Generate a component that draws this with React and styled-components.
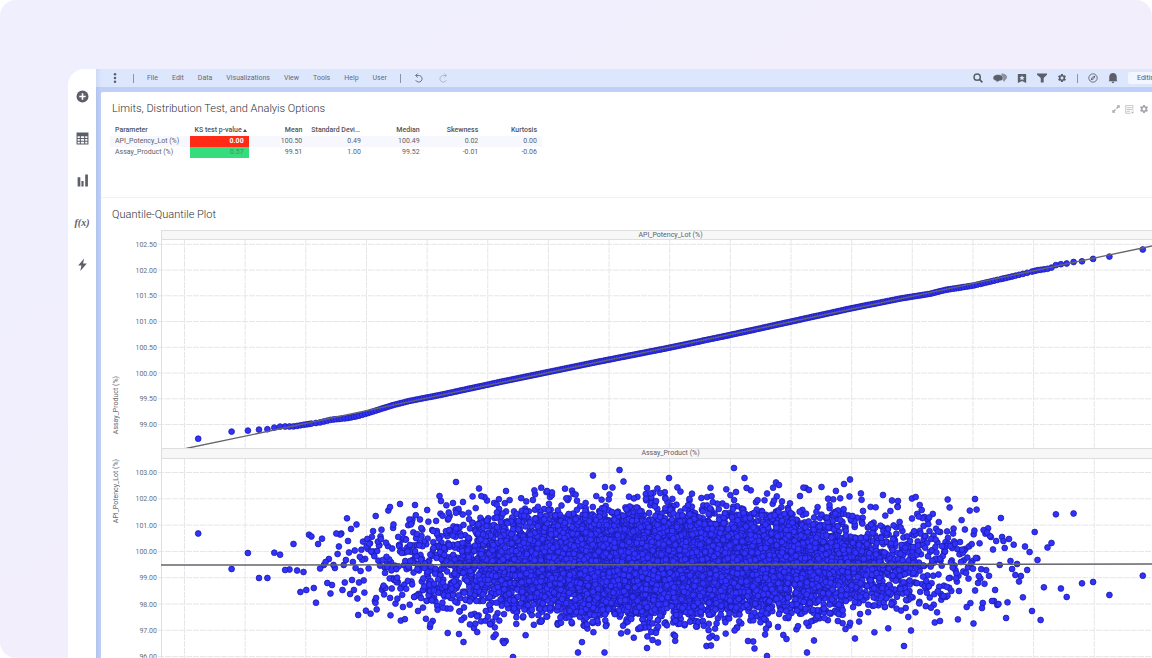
import React from "react";
import styled, { createGlobalStyle } from "styled-components";
import { MdSettings } from "react-icons/md";

const Global = createGlobalStyle`
  *, *::before, *::after { box-sizing: border-box; }
  html, body { margin: 0; background: #fff; }
  body { font-family: Roboto, "Liberation Sans", sans-serif; color: #5a5c66; }
  button { font: inherit; color: inherit; border: 0; padding: 0; background: none; cursor: pointer; }
`;

const Stage = styled.div`
  height: 100vh;
  padding: 69px 0 0 68px;
  overflow: hidden;
  border-radius: 16px 16px 0 16px;
  background: linear-gradient(145deg, #efeffe 15%, #f3eefb 50%, #efecfb);
`;

const Window = styled.div`
  display: flex;
  min-height: 100%;
  margin-right: -27px;
  border-radius: 16px 0 0 0;
  overflow: hidden;
  background: #fff;
`;

const Sidebar = styled.nav`
  display: flex;
  flex-direction: column;
  align-items: center;
  gap: 28px;
  width: 28px;
  padding-top: 20px;
`;

const IconButton = styled.button`
  display: flex;
  flex: none;
  align-items: center;
  justify-content: center;
  width: ${(p) => p.$w || 10}px;
  height: ${(p) => p.$h || 10}px;
  color: ${(p) => p.$color || "#5c5e68"};
`;

const FormulaText = styled.span`
  font: italic bold 10px "Liberation Serif", serif;
`;

const Main = styled.main`
  flex: 1;
  min-width: 0;
  display: flex;
  flex-direction: column;
  background: linear-gradient(90deg, #b2c4ee, #bfcff7 5px);
`;

const TopBar = styled.header`
  display: flex;
  align-items: center;
  justify-content: space-between;
  height: 18px;
  padding-left: 14px;
  background: linear-gradient(90deg, #cddaf5, #dce7fe 6px);
`;

const BarGroup = styled.div`
  display: flex;
  align-items: center;
  gap: ${(p) => p.$gap}px;
`;

const MenuButton = styled.button`
  font-size: 7px;
  line-height: 10px;
  color: #666a78;
`;

const Divider = styled.span`
  width: 1px;
  height: 9px;
  margin: 0 ${(p) => (p.$tight ? "-1px" : "0")};
  background: #8b93a6;
`;

const ModeButton = styled.button`
  width: 51px;
  height: 12px;
  padding-left: 9px;
  border-radius: 2px 0 0 2px;
  background: #f3f6fe;
  font-size: 7px;
  line-height: 12px;
  text-align: left;
`;

const Sheet = styled.div`
  flex: 1;
  margin: 5px 0 0 5px;
  border-radius: 2px 0 0 0;
  background: #fff;
`;

const Panel = styled.section`
  padding: 9px 0 0 9px;
  min-height: ${(p) => p.$min || 0}px;
  border-bottom: 1px solid #f0f1f8;
`;

const PanelHead = styled.div`
  display: flex;
  align-items: center;
  justify-content: space-between;
  height: 16px;
  padding: 0 30px 0 2px;
`;

const PanelTitle = styled.h2`
  margin: 0;
  font-size: 11px;
  line-height: 16px;
  font-weight: 300;
  color: #303136;
`;

const Table = styled.table`
  width: 432px;
  margin-top: 8px;
  table-layout: fixed;
  border-collapse: collapse;
  font-size: 7px;
  line-height: 11px;
  color: #5e6068;
`;

const HeadCell = styled.th`
  width: ${(p) => (p.$first ? "80px" : "auto")};
  padding: ${(p) => (p.$first ? "0 0 0 5px" : p.$sorted ? "0 2px 0 0" : "0 5px 0 4px")};
  text-align: ${(p) => (p.$first ? "left" : "right")};
  font-weight: 500;
  color: #50525a;
  white-space: nowrap;
  overflow: hidden;
  text-overflow: ellipsis;
`;

const Row = styled.tr`
  background: ${(p) => (p.$shade ? "#f7f8fe" : "transparent")};
`;

const Cell = styled.td`
  padding: ${(p) => (p.$first ? "0 0 0 5px" : "0 5px 0 0")};
  text-align: ${(p) => (p.$first ? "left" : "right")};
  background: ${(p) => p.$bg || "transparent"};
  color: ${(p) => p.$fg || "inherit"};
  font-weight: ${(p) => (p.$strong ? 700 : 400)};
`;

const SortMark = styled.span`
  display: inline-block;
  margin-left: 1px;
  border: 2px solid transparent;
  border-top: 0;
  border-bottom: 3px solid #45474f;
`;

const Trellis = styled.div`
  display: flex;
  margin-top: 7px;
`;

const AxisTitles = styled.div`
  display: flex;
  flex-direction: column;
  flex: none;
  align-items: center;
  gap: 25px;
  width: 12px;
  padding-top: 146px;
`;

const AxisTitle = styled.span`
  writing-mode: vertical-rl;
  transform: rotate(180deg);
  font-size: 7px;
  line-height: 10px;
  color: #666870;
`;

const Plots = styled.div`
  flex: 1;
  min-width: 0;
`;

const PlotTitle = styled.h3`
  height: ${(p) => p.$h}px;
  margin: 0 0 0 39px;
  border: 1px solid #dedede;
  border-width: 1px 0 1px 1px;
  background: #f7f7f7;
  font-size: 7px;
  line-height: 8px;
  font-weight: 400;
  text-align: center;
  color: #5e6068;
`;

const Plot = styled.svg`
  display: block;
  width: 100%;
  height: ${(p) => p.$h}px;
`;

/* ---------- data ---------- */

const N = 10000;
const CENTER = 509.5;
const SIGMA = 121.4;
const LEFT = 161;

// Inverse of the standard normal distribution (Acklam's approximation).
function quantile(p) {
  const a = [-39.69683028665376, 220.9460984245205, -275.9285104469687, 138.357751867269, -30.66479806614716, 2.506628277459239];
  const b = [-54.47609879822406, 161.5858368580409, -155.6989798598866, 66.80131188771972, -13.28068155288572];
  const c = [-0.007784894002430293, -0.3223964580411365, -2.400758277161838, -2.549732539343734, 4.374664141464968, 2.938163982698783];
  const d = [0.007784695709041462, 0.3224671290700398, 2.445134137142996, 3.754408661907416];
  if (p > 0.97575) return -quantile(1 - p);
  if (p < 0.02425) {
    const q = Math.sqrt(-2 * Math.log(p));
    return (((((c[0] * q + c[1]) * q + c[2]) * q + c[3]) * q + c[4]) * q + c[5]) /
      ((((d[0] * q + d[1]) * q + d[2]) * q + d[3]) * q + 1);
  }
  const q = p - 0.5;
  const r = q * q;
  return ((((((a[0] * r + a[1]) * r + a[2]) * r + a[3]) * r + a[4]) * r + a[5]) * q) /
    (((((b[0] * r + b[1]) * r + b[2]) * r + b[3]) * r + b[4]) * r + 1);
}

function random(seed) {
  let s = seed;
  return () => {
    s = (s + 0x6d2b79f5) | 0;
    let t = Math.imul(s ^ (s >>> 15), 1 | s);
    t = (t + Math.imul(t ^ (t >>> 7), 61 | t)) ^ t;
    return ((t ^ (t >>> 14)) >>> 0) / 4294967296;
  };
}

const xs = Array.from({ length: N }, (_, i) => CENTER + SIGMA * quantile((i + 0.5) / N));

const LOW = [533.5, 569, 553, 578, 578, 552.7, 554.7, 570, 569.5, 544, 570.5, 592, 572, 590, 534.7, 536.5, 588, 602.7, 544, 568.5, 538.7, 565, 562, 583, 559, 593.5, 585, 565, 568, 533.5, 554, 546.5, 534.5, 533.5, 590, 565, 582.5, 560, 518.3, 541, 552.5, 594, 529, 580, 562, 590, 550.5, 568, 524.5, 598.5, 615];
const HIGH = [575.7, 595, 582, 583.3, 513.5, 597, 588.5, 514.3, 543, 547.5, 587.3, 620, 560, 532, 611, 552, 570, 546.5, 597.3, 576, 581.5, 564, 575, 544.7, 569, 561, 539, 602.3, 618, 548, 541, 537, 518, 565, 604, 605, 541, 590, 601, 549.5, 601, 537, 536];
const OUTLIERS = [
  [456, 482], [479, 488.5], [619.5, 470], [593, 475.5], [734, 468], [744.5, 478], [669, 478], [623.5, 481.5],
  [776, 482.5], [779, 485], [850, 479.5], [844, 484], [809, 490], [605, 487], [612.5, 487.5], [647, 488],
  [506, 491], [547, 491], [736, 492], [439.5, 496], [441, 501], [400, 504], [390, 507], [415, 505],
  [375.7, 516], [463, 502], [453, 503], [947.7, 499.5], [975, 499], [912, 498.5], [915.7, 497], [919.7, 505],
  [883, 495], [849.5, 496.5], [800, 496], [898, 501], [892, 500.5], [447.7, 633], [459, 634], [463.5, 642],
  [513, 657], [502.7, 641], [504, 643], [495.7, 634.5], [578, 652.5], [604.5, 652.5], [647, 648], [652.5, 640],
  [658, 642.5], [706.5, 646], [711, 645.5], [754.5, 648.5], [767, 656], [807, 652.5], [748, 641], [814, 640.5],
  [855, 638.5], [904, 646], [911, 630.5], [973.5, 623.5], [940, 621], [786.5, 639], [430, 627], [430.5, 624],
];

const SCATTER_TOP = 459;
const rand = random(20);
const cloud = xs.map((x, i) => {
  if (i < LOW.length) return [x, LOW[i] - SCATTER_TOP];
  if (N - 1 - i < HIGH.length) return [x, HIGH[N - 1 - i] - SCATTER_TOP];
  let z;
  const edge = Math.min(1, 0.7 + (Math.min(i, N - i) / N) * 4);
  do {
    z = quantile(rand() * 0.9998 + 0.0001);
  } while (Math.abs(z) > 2.95 * edge);
  return [x, 105.5 + z * 26.3];
});
for (let i = cloud.length - 1; i > 0; i--) {
  const j = Math.floor(rand() * (i + 1));
  [cloud[i], cloud[j]] = [cloud[j], cloud[i]];
}
OUTLIERS.forEach(([x, y]) => cloud.push([x - LEFT, y - SCATTER_TOP]));

const QQ_TOP = 240;
const QQ_KNOTS = [
  [198, 438.7], [231.5, 431.6], [248, 430.6], [259, 429.6], [267, 429.3], [274, 427.6], [280, 426.6], [294, 426.4],
  [306, 424.4], [320, 422.4], [332, 419.6], [347, 418.2], [358, 416], [367, 413.4], [380, 409.2], [392, 405.4],
  [410, 400.8], [440, 395], [500, 382], [600, 361.4], [670, 347.6], [730, 335], [850, 308.6], [900, 298.6],
  [930, 293.8], [945, 290], [973, 285.6], [990, 281.6], [1010, 277], [1028, 272.6], [1037, 270.3], [1050, 268.5],
  [1055, 265.3], [1060, 264.3], [1066, 263.7], [1073, 262], [1081, 261.5], [1092, 259], [1108.5, 256.8], [1142, 249.7],
];

function interpolate(knots, x) {
  let i = 1;
  while (i < knots.length - 1 && knots[i][0] < x) i++;
  const [x0, y0] = knots[i - 1];
  const [x1, y1] = knots[i];
  return y0 + ((y1 - y0) * (x - x0)) / (x1 - x0);
}

const curve = [];
xs.forEach((x, i) => {
  const last = curve[curve.length - 1];
  if (i > N - 12 || !last || x - last[0] > 2.4) {
    curve.push([x, interpolate(QQ_KNOTS, x + LEFT) - QQ_TOP]);
  }
});

const columns = Array.from({ length: 17 }, (_, i) => 23.5 + i * 60.65);

function Grid({ ticks, height }) {
  return (
    <g>
      {columns.map((x) => (
        <line key={x} x1={x} x2={x} y1="0" y2={height} stroke="#e6e6e6" strokeDasharray="6 1" />
      ))}
      {ticks.map(({ y, label }) => (
        <g key={label}>
          <line x1="-3" x2="100%" y1={y} y2={y} stroke="#e6e6e6" strokeDasharray="6 1" />
          <text x="-4" y={y + 2.5} textAnchor="end" fontSize="7" fill="#6b6d75">{label}</text>
        </g>
      ))}
      <line x1="0.500" x2="0.500" y1="0" y2={height} stroke="#dedede" />
    </g>
  );
}

const Dots = React.memo(function Dots({ points }) {
  return (
    <g fill="#3232ff" stroke="#1a1aa8" strokeWidth="0.8">
      {points.map(([x, y], i) => (
        <circle key={i} cx={x.toFixed(1)} cy={y.toFixed(1)} r="2.900" />
      ))}
    </g>
  );
});

const qqTicks = ["102.50", "102.00", "101.50", "101.00", "100.50", "100.00", "99.50", "99.00"]
  .map((label, i) => ({ label, y: 4.3 + i * 25.75 }));
const cloudTicks = ["103.00", "102.00", "101.00", "100.00", "99.00", "98.00", "97.00", "96.00"]
  .map((label, i) => ({ label, y: 13.5 + i * 26.3 }));

/* ---------- icons ---------- */

const icon = (size, children) => (
  <svg width={size} height={size} viewBox="0 0 24 24" fill="currentColor" aria-hidden="true">{children}</svg>
);

const Plus = () => icon(13, <><circle cx="12" cy="12" r="11" /><path d="M12 6v12M6 12h12" stroke="#fff" strokeWidth="3" /></>);
const TableIcon = () => icon(13, <path fillRule="evenodd" d="M1 1h22v22H1zM3 8v3h4V8zm6 0v3h6V8zm8 0v3h4V8zM3 13v3h4v-3zm6 0v3h6v-3zm8 0v3h4v-3zM3 18v3h4v-3zm6 0v3h6v-3zm8 0v3h4v-3z" />);
const Bars = () => icon(13, <path d="M3 6h5v17H3zM10 13h4v10h-4zM17 1h5v22h-5z" />);
const Bolt = () => icon(13, <path d="M15 1 4 14h6l-2 10L20 10h-7z" />);
const Dots3 = () => icon(10, <><circle cx="12" cy="3" r="3" /><circle cx="12" cy="12" r="3" /><circle cx="12" cy="21" r="3" /></>);
const Undo = () => icon(10, <path d="M4 5H13a8 8 0 1 1-9 11M9 0 4 5l5 5" transform="translate(0 1)" fill="none" stroke="currentColor" strokeWidth="2" />);
const Redo = () => icon(10, <path d="M20 5H11a8 8 0 1 0 9 11M15 0l5 5-5 5" transform="translate(0 1)" fill="none" stroke="currentColor" strokeWidth="2" />);
const Search = () => icon(10, <><circle cx="10" cy="10" r="7.500" fill="none" stroke="currentColor" strokeWidth="3.500" /><path d="m15.500 15.500 7 7" stroke="currentColor" strokeWidth="4" /></>);
const Chat = () => (
  <svg width="14" height="10" viewBox="0 0 28 20" aria-hidden="true">
    <path d="M17 1c6 0 11 3 11 7 0 3-2 5-4 6l-1 4-4-4h-4z" fill="#8d919d" />
    <path d="M10 3c6 0 10 3 10 7s-4 6-8 6l-5 3v-3c-4-1-7-3-7-6 0-4 4-7 10-7z" fill="currentColor" stroke="#dce7fe" strokeWidth="1" />
  </svg>
);
const Bookmark = () => icon(11, <path fillRule="evenodd" d="M2 1h20v22l-10-5-10 5zM12 4l-2 4.500H5.500L9 11.500 8 16l4-2.500 4 2.500-1-4.500 3.500-3H14z" />);
const Funnel = () => icon(10, <path d="M0 1h24v3l-8 8v11h-7V12L0 4z" />);
const Compass = () => icon(10, <><circle cx="12" cy="12" r="10" fill="none" stroke="currentColor" strokeWidth="2" /><path fillRule="evenodd" d="m18 6-3.500 8.500L6 18l3.500-8.500zM12 10a2 2 0 1 0 0 4 2 2 0 0 0 0-4z" /></>);
const Bell = () => icon(10, <path d="M12 0c5 0 9 4 9 9v9l2 2H1l2-2V9c0-5 4-9 9-9zM9 21h6c0 2-1 3-3 3s-3-1-3-3z" />);
const Expand = () => icon(8, <path d="M14 1h9v9l-3-3-5 5-3-3 5-5zM10 23H1v-9l3 3 5-5 3 3-5 5z" />);
const Notes = () => icon(9, <><path d="M21 15V1H2v21h13" fill="none" stroke="currentColor" strokeWidth="2" /><path d="M5 7h13M5 12h13M5 17h8" stroke="currentColor" strokeWidth="2" /><path d="M16 18h8l-4 5z" /></>);

const menus = ["File", "Edit", "Data", "Visualizations", "View", "Tools", "Help", "User"];
const headers = ["Mean", "Standard Deviation", "Median", "Skewness", "Kurtosis"];
const rows = [
  { name: "API_Potency_Lot (%)", p: "0.00", bg: "#ff2b16", fg: "#fff", strong: true, values: ["100.50", "0.49", "100.49", "0.02", "0.00"] },
  { name: "Assay_Product (%)", p: "0.57", bg: "#37dc7c", fg: "#4a8a62", values: ["99.51", "1.00", "99.52", "-0.01", "-0.06"] },
];

export default function App() {
  return (
    <>
      <Global />
      <Stage>
        <Window>
          <Sidebar aria-label="Tools">
            <IconButton $w={14} $h={14} aria-label="Add"><Plus /></IconButton>
            <IconButton $w={14} $h={14} aria-label="Data table"><TableIcon /></IconButton>
            <IconButton $w={14} $h={14} aria-label="Charts"><Bars /></IconButton>
            <IconButton $w={14} $h={14} aria-label="Functions"><FormulaText>f(x)</FormulaText></IconButton>
            <IconButton $w={14} $h={14} aria-label="Actions"><Bolt /></IconButton>
          </Sidebar>
          <Main>
            <TopBar>
              <BarGroup $gap={14}>
                <IconButton aria-label="More"><Dots3 /></IconButton>
                <Divider $tight />
                {menus.map((m) => <MenuButton key={m}>{m}</MenuButton>)}
                <Divider $tight />
                <IconButton aria-label="Undo"><Undo /></IconButton>
                <IconButton aria-label="Redo" $color="#a5adbf"><Redo /></IconButton>
              </BarGroup>
              <BarGroup $gap={10}>
                <IconButton aria-label="Search"><Search /></IconButton>
                <IconButton aria-label="Comments" $w={14}><Chat /></IconButton>
                <IconButton aria-label="Bookmarks"><Bookmark /></IconButton>
                <IconButton aria-label="Filters"><Funnel /></IconButton>
                <IconButton aria-label="Settings"><MdSettings size={12} /></IconButton>
                <Divider />
                <IconButton aria-label="Explore"><Compass /></IconButton>
                <IconButton aria-label="Notifications"><Bell /></IconButton>
                <ModeButton>Editing</ModeButton>
              </BarGroup>
            </TopBar>
            <Sheet>
              <Panel $min={106}>
                <PanelHead>
                  <PanelTitle>Limits, Distribution Test, and Analyis Options</PanelTitle>
                  <BarGroup $gap={5}>
                    <IconButton aria-label="Expand" $w={8} $color="#a3a5ab"><Expand /></IconButton>
                    <IconButton aria-label="Notes" $w={9} $color="#b0b2b8"><Notes /></IconButton>
                    <IconButton aria-label="Panel settings" $color="#a3a5ab"><MdSettings size={10} /></IconButton>
                  </BarGroup>
                </PanelHead>
                <Table>
                  <thead>
                    <tr>
                      <HeadCell $first>Parameter</HeadCell>
                      <HeadCell $sorted>KS test p-value<SortMark /></HeadCell>
                      {headers.map((h) => <HeadCell key={h}>{h}</HeadCell>)}
                    </tr>
                  </thead>
                  <tbody>
                    {rows.map((r, i) => (
                      <Row key={r.name} $shade={i === 0}>
                        <Cell $first>{r.name}</Cell>
                        <Cell $bg={r.bg} $fg={r.fg} $strong={r.strong}>{r.p}</Cell>
                        {r.values.map((v, k) => <Cell key={k}>{v}</Cell>)}
                      </Row>
                    ))}
                  </tbody>
                </Table>
              </Panel>
              <Panel>
                <PanelHead>
                  <PanelTitle>Quantile-Quantile Plot</PanelTitle>
                </PanelHead>
                <Trellis>
                  <AxisTitles>
                    <AxisTitle>Assay_Product (%)</AxisTitle>
                    <AxisTitle>API_Potency_Lot (%)</AxisTitle>
                  </AxisTitles>
                  <Plots>
                    <PlotTitle $h={10}>API_Potency_Lot (%)</PlotTitle>
                    <Plot $h={208} role="img" aria-label="Quantile plot of API_Potency_Lot">
                      <svg x="39" overflow="visible">
                        <Grid ticks={qqTicks} height={208} />
                        <Dots points={curve} />
                        <line x1="25" y1="208.500" x2="1018" y2="0.300" stroke="#63656b" strokeWidth="1.300" />
                      </svg>
                    </Plot>
                    <PlotTitle $h={11}>Assay_Product (%)</PlotTitle>
                    <Plot $h={230} role="img" aria-label="Scatter plot of Assay_Product">
                      <svg x="39" overflow="visible">
                        <Grid ticks={cloudTicks} height={230} />
                        <Dots points={cloud} />
                        <line x1="0" y1="106" x2="100%" y2="105" stroke="#63656b" strokeWidth="1.500" />
                      </svg>
                    </Plot>
                  </Plots>
                </Trellis>
              </Panel>
            </Sheet>
          </Main>
        </Window>
      </Stage>
    </>
  );
}
